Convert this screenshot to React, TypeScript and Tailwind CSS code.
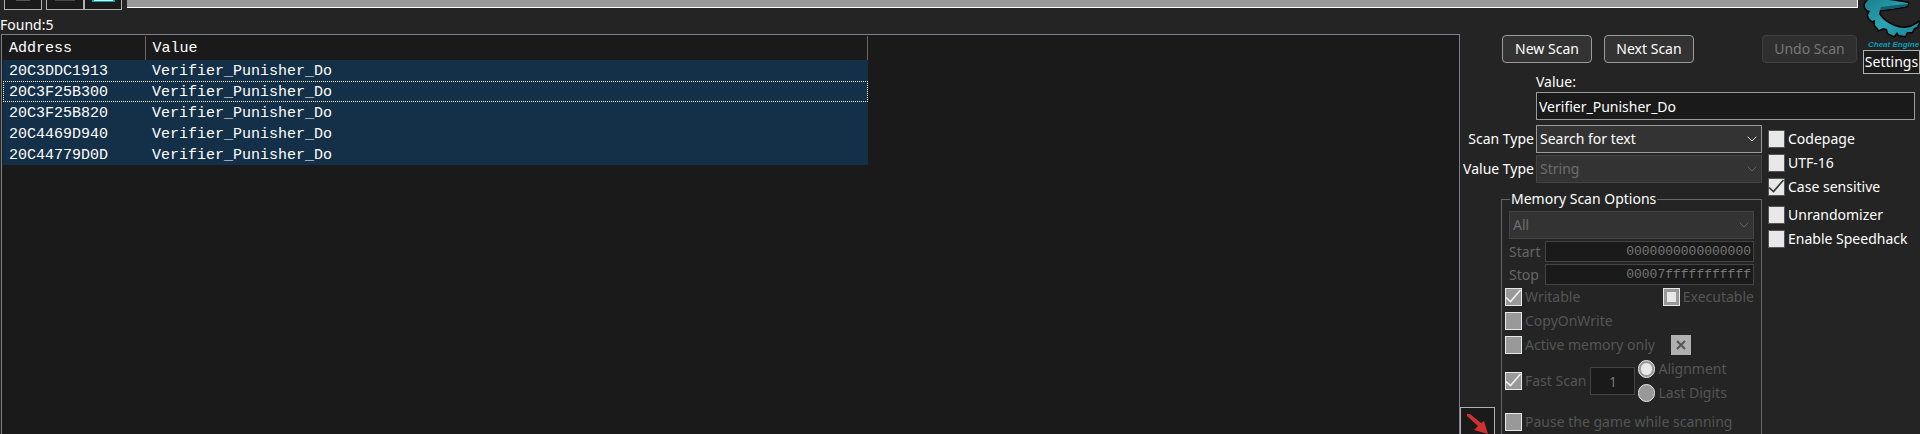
import type { ReactNode } from "react";

const rows = [
  { address: "20C3DDC1913", value: "Verifier_Punisher_Do" },
  { address: "20C3F25B300", value: "Verifier_Punisher_Do", focused: true },
  { address: "20C3F25B820", value: "Verifier_Punisher_Do" },
  { address: "20C4469D940", value: "Verifier_Punisher_Do" },
  { address: "20C44779D0D", value: "Verifier_Punisher_Do" },
];

type TickProps = {
  children: ReactNode;
  checked?: boolean;
  partial?: boolean;
  disabled?: boolean;
};

const Tick = ({ children, checked, partial, disabled }: TickProps) => {
  return (
    <label className={`flex h-6 items-center gap-[3px] ${disabled ? "text-[#555]" : "text-white"}`}>
      <span className="grid shrink-0">
        <input
          type="checkbox"
          defaultChecked={checked}
          disabled={disabled}
          className={`col-start-1 row-start-1 h-[18px] w-[17px] appearance-none border ${
            disabled ? "border-[#e8e8e8] bg-[#999]" : "border-[#555] bg-[#e8e8e8]"
          }`}
        />
        {checked && (
          <svg
            viewBox="0 0 17 18"
            className={`pointer-events-none col-start-1 row-start-1 h-[18px] w-[17px] ${
              disabled ? "text-[#f0f0f0]" : "text-[#333]"
            }`}
            fill="none"
            stroke="currentColor"
            strokeWidth="1.6"
          >
            <path d="M1 9.5 L5.5 13.5 L15.5 2" />
          </svg>
        )}
        {partial && (
          <span className="pointer-events-none col-start-1 row-start-1 h-[10px] w-[9px] place-self-center bg-[#e8e8e8]" />
        )}
      </span>
      {children}
    </label>
  );
};

type RadioProps = { children: ReactNode; checked?: boolean };

const Radio = ({ children, checked }: RadioProps) => {
  return (
    <label className="flex h-6 items-center gap-[3px] text-[#555]">
      <span className="grid shrink-0">
        <input
          type="radio"
          name="fastscan"
          defaultChecked={checked}
          disabled
          className="col-start-1 row-start-1 h-[18px] w-[17px] appearance-none rounded-full border border-[#e8e8e8] bg-[#999]"
        />
        {checked && (
          <span className="pointer-events-none col-start-1 row-start-1 h-3 w-[11px] place-self-center rounded-full bg-[#e8e8e8]" />
        )}
      </span>
      {children}
    </label>
  );
};

type DropDownProps = { id: string; value: string; label?: string; disabled?: boolean };

const DropDown = ({ id, value, label, disabled }: DropDownProps) => {
  return (
    <div className="grid flex-1">
      <select
        id={id}
        aria-label={label}
        disabled={disabled}
        className={`col-start-1 row-start-1 h-7 w-full appearance-none border bg-[#333] px-[3px] opacity-100 ${
          disabled ? "border-[#444] text-[#6d6d6d]" : "border-[#9b9b9b] text-white"
        }`}
      >
        <option>{value}</option>
      </select>
      <svg
        viewBox="0 0 10 6"
        className={`pointer-events-none col-start-1 row-start-1 mr-[5px] h-[6px] w-[10px] self-center justify-self-end ${
          disabled ? "text-[#666]" : "text-[#ddd]"
        }`}
        fill="none"
        stroke="currentColor"
      >
        <path d="M0.7 0.7 L5 5 L9.3 0.7" />
      </svg>
    </div>
  );
};

const Logo = () => {
  return (
    <svg viewBox="0 0 57 50" className="h-[50px] w-[57px]">
      <defs>
        <linearGradient id="teal" x1="0" y1="0" x2="1" y2="1">
          <stop offset="0" stopColor="#1a7f8c" />
          <stop offset="0.5" stopColor="#2ba3b5" />
          <stop offset="1" stopColor="#1c8496" />
        </linearGradient>
      </defs>
      <path
        d="M5 0 L2 4 L2 7 L4 10 L7 11 L5 15 L6 18 L9 21 L12 20 L12 25 L16 30 L20 28 L24 29 L25 33 L31 36 L34 32 L36 35 L42 36 L44 32 L49 32 L51 28 L54 27 L56 22 C50 27 45 28 40 28 C30 27 20 21 16 14 L17 10 C26 9 35 8 44 6 L45 3 C39 2 33 1 26 0 Z"
        fill="url(#teal)"
        stroke="#050505"
        strokeWidth="3"
        strokeLinejoin="round"
        paintOrder="stroke"
      />
      <path d="M17 10 C26 9 35 8 44 6 L44 4 C34 5 25 6 18 7 Z" fill="#0f5f6c" />
      <text
        x="5"
        y="47"
        fontFamily="Liberation Sans, sans-serif"
        fontSize="8"
        fontWeight="bold"
        fontStyle="italic"
        fill="#2497a8"
        stroke="#062b30"
        strokeWidth="1"
        paintOrder="stroke"
      >
        Cheat Engine
      </text>
    </svg>
  );
};

const Toolbar = () => {
  return (
    <header className="flex h-[34px] items-start">
      <div className="flex w-[127px] shrink-0 pl-1">
        <button aria-label="Process" className="mr-1 flex h-[10px] w-[38px] justify-center border border-t-0 border-[#b0b0b0] bg-[#1a1a1a]">
          <span className="h-px w-[14px] bg-[#555]" />
        </button>
        <button aria-label="Open" className="flex h-[10px] w-[38px] justify-center border border-t-0 border-[#b0b0b0] bg-[#1a1a1a]">
          <span className="h-px w-5 bg-[#484843]" />
        </button>
        <button aria-label="Save" className="flex h-[10px] w-[38px] justify-center border border-t-0 border-[#b0b0b0] bg-[#1a1a1a]">
          <span className="h-[2px] w-[23px] border-x-2 border-b border-[#00a8a8] bg-[#d8f4f4]" />
        </button>
      </div>
      <div className="h-2 flex-1 border-r border-b border-white bg-[#999]" />
      <div className="ml-[5px] flex w-[57px] shrink-0 flex-col">
        <Logo />
        <button className="flex h-6 items-center justify-center border border-[#b0b0b0] bg-[#1a1a1a]">Settings</button>
      </div>
    </header>
  );
};

const FoundList = () => {
  return (
    <section className="mx-px min-w-0 flex-1 border border-b-0 border-[#7d7f88] bg-[#1a1a1a] px-px pt-px">
      <table className="w-[865px] table-fixed border-collapse text-left font-['Courier_New','Liberation_Mono',monospace] text-[15px]">
        <thead>
          <tr className="h-6">
            <th className="w-[142px] border-r border-[#666] pt-[2px] pl-[6px] font-normal">Address</th>
            <th className="border-r border-[#666] pt-[2px] pl-[7px] font-normal">Value</th>
          </tr>
        </thead>
        <tbody>
          {rows.map((row) => (
            <tr
              key={row.address}
              className={`h-[21px] bg-[#143048] leading-4 ${
                row.focused ? "outline-1 -outline-offset-1 outline-dotted outline-white" : ""
              }`}
            >
              <td className="pt-[2px] pl-[6px]">{row.address}</td>
              <td className="pt-[2px] pl-[7px]">{row.value}</td>
            </tr>
          ))}
        </tbody>
      </table>
    </section>
  );
};

const MemoryOptions = () => {
  return (
    <fieldset className="ml-10 h-[300px] border border-[#666] pr-[7px] pl-[3px]">
      <legend className="ml-[5px] h-5 px-px leading-5">Memory Scan Options</legend>
      <div className="flex flex-col gap-[2px] pt-[2px] pl-1 text-[#666]">
        <DropDown id="region" label="Memory region" value="All" disabled />
        <div className="flex items-center">
          <label htmlFor="start" className="w-9">Start</label>
          <input
            id="start"
            disabled
            defaultValue="0000000000000000"
            className="h-[21px] min-w-0 flex-1 border border-[#444] bg-[#1a1a1a] px-[2px] text-right font-['Liberation_Mono',monospace] text-[13px] text-[#777]"
          />
        </div>
        <div className="flex items-center">
          <label htmlFor="stop" className="w-9">Stop</label>
          <input
            id="stop"
            disabled
            defaultValue="00007fffffffffff"
            className="h-[21px] min-w-0 flex-1 border border-[#444] bg-[#1a1a1a] px-[2px] text-right font-['Liberation_Mono',monospace] text-[13px] text-[#777]"
          />
        </div>
      </div>
      <div className="flex justify-between">
        <Tick checked disabled>Writable</Tick>
        <Tick partial disabled>Executable</Tick>
      </div>
      <Tick disabled>CopyOnWrite</Tick>
      <div className="flex items-center gap-4">
        <Tick disabled>Active memory only</Tick>
        <button aria-label="Clear" className="flex size-5 items-center justify-center bg-[#b0b0b0] text-[#555]">
          <svg viewBox="0 0 10 10" className="size-[10px]" stroke="currentColor" strokeWidth="2">
            <path d="M1 1 L9 9 M9 1 L1 9" />
          </svg>
        </button>
      </div>
      <div className="flex items-center">
        <Tick checked disabled>Fast Scan</Tick>
        <input
          aria-label="Alignment value"
          disabled
          defaultValue="1"
          className="mr-[3px] ml-1 h-7 w-[45px] border border-[#444] bg-[#1a1a1a] text-center text-[#777]"
        />
        <div>
          <Radio checked>Alignment</Radio>
          <Radio>Last Digits</Radio>
        </div>
      </div>
      <div className="mt-[5px]">
        <Tick disabled>Pause the game while scanning</Tick>
      </div>
    </fieldset>
  );
};

const ScanPanel = () => {
  return (
    <section className="w-[459px] shrink-0 pt-px">
      <div className="flex h-7 gap-3 pr-[63px] pl-[41px]">
        <button className="w-[90px] rounded border border-[#9b9b9b] bg-[#333]">New Scan</button>
        <button className="w-[90px] rounded border border-[#9b9b9b] bg-[#333]">Next Scan</button>
        <button disabled className="ml-auto w-[95px] rounded border border-[#3f3f3f] bg-[#2f2f2f] text-[#777]">Undo Scan</button>
      </div>
      <div className="mt-[9px] flex flex-col pr-[5px] pl-[75px]">
        <label htmlFor="value" className="h-5 leading-5">Value:</label>
        <input
          id="value"
          defaultValue="Verifier_Punisher_Do"
          className="h-7 border border-[#9b9b9b] bg-[#1a1a1a] px-[2px]"
        />
      </div>
      <div className="mt-[5px] flex gap-[6px]">
        <div className="flex w-[301px] flex-col gap-[2px]">
          <div className="flex items-center">
            <label htmlFor="scantype" className="w-[75px] pr-[2px] text-right">Scan Type</label>
            <DropDown id="scantype" value="Search for text" />
          </div>
          <div className="flex items-center">
            <label htmlFor="valuetype" className="w-[75px] pr-[2px] text-right">Value Type</label>
            <DropDown id="valuetype" value="String" disabled />
          </div>
          <div className="mt-1">
            <MemoryOptions />
          </div>
        </div>
        <div className="pt-[2px]">
          <Tick>Codepage</Tick>
          <Tick>UTF-16</Tick>
          <Tick checked>Case sensitive</Tick>
          <div className="mt-1">
            <Tick>Unrandomizer</Tick>
            <Tick>Enable Speedhack</Tick>
          </div>
        </div>
      </div>
    </section>
  );
};

const App = () => {
  return (
    <div className="relative flex h-screen flex-col overflow-hidden bg-[#242424] font-['Segoe_UI','Noto_Sans',sans-serif] text-[14px] leading-5 whitespace-nowrap text-white">
      <Toolbar />
      <p className="absolute top-[15px] left-0">Found:5</p>
      <main className="flex min-h-0 flex-1">
        <FoundList />
        <ScanPanel />
      </main>
      <button
        aria-label="Add to address list"
        className="absolute right-[425px] bottom-0 h-[27px] w-[35px] border border-b-0 border-[#b0b0b0] bg-[#1a1a1a]"
      >
        <svg viewBox="0 0 33 26" className="h-[26px] w-[33px]">
          <path d="M6 8 L6 6 L9 6 L20 15 L23 13 L27 26 L13 22 L17 18 Z" fill="#d03030" />
        </svg>
      </button>
    </div>
  );
};

export default App;
